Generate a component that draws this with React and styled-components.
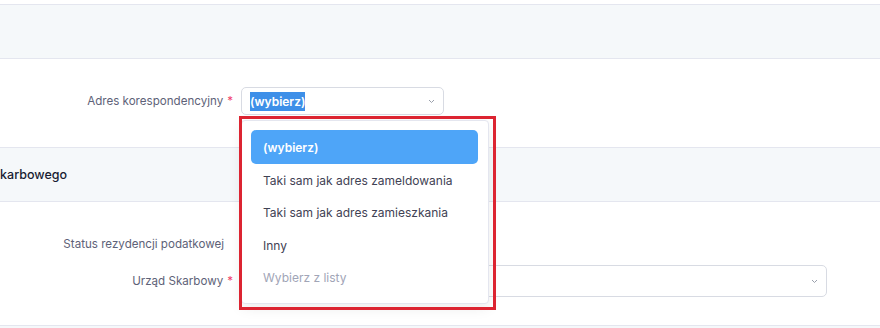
import React from "react";
import styled, { createGlobalStyle } from "styled-components";

const Global = createGlobalStyle`
  html, body { margin: 0; padding: 0; background: #ffffff; }
  body { font-family: Inter, "Noto Sans", sans-serif; }
  * { box-sizing: border-box; }
`;

const Page = styled.div`
  position: relative;
  width: 880px;
  height: 328px;
  overflow: hidden;
  background: #ffffff;
  padding-top: 4px;
`;

const SectionHeader = styled.div`
  height: ${(p) => p.$h}px;
  background: #f5f8fa;
  border-top: 1px solid #e4e6ef;
  border-bottom: 1px solid #e4e6ef;
  display: flex;
  align-items: center;
`;

const SectionTitle = styled.div`
  font-size: 12.5px;
  font-weight: 500;
  color: #181c32;
  margin-left: -8px;
`;

const FormBody = styled.div`
  display: flex;
  flex-direction: column;
  gap: ${(p) => p.$gap || 0}px;
  padding: ${(p) => p.$pad};
`;

const Row = styled.div`
  display: grid;
  grid-template-columns: 233px 1fr;
  column-gap: 8px;
  align-items: center;
  height: ${(p) => p.$h}px;
`;

const Label = styled.label`
  text-align: right;
  font-size: 11.6px;
  color: #5e6278;
  padding-right: ${(p) => (p.$required ? 0 : 9)}px;
`;

const Star = styled.span`
  color: #f1416c;
  margin-left: 4px;
`;

const SelectBox = styled.div`
  width: ${(p) => p.$w}px;
  height: ${(p) => p.$h}px;
  border: 1px solid #d8dbe3;
  border-radius: 5px;
  background: #ffffff;
  display: flex;
  align-items: center;
  justify-content: space-between;
  padding: 0 8px 0 8px;
  font-size: 12px;
`;

const Selected = styled.span`
  background: #3d8fe8;
  color: #ffffff;
  font-weight: 600;
  padding: 2px 0;
`;

const Chevron = () => (
  <svg width="7" height="5" viewBox="0 0 7 5" fill="none">
    <path d="M1 1l2.5 2.5L6 1" stroke="#9aa0ac" strokeWidth="1" />
  </svg>
);

const Footer = styled.div`
  border-top: 1px solid #e4e6ef;
  background: #f5f8fa;
  height: 10px;
`;

const Dropdown = styled.ul`
  position: absolute;
  left: 241px;
  top: 120px;
  width: 248px;
  height: 184px;
  margin: 0;
  padding: 9px 10px 9px 9px;
  list-style: none;
  background: #ffffff;
  border: 1px solid #e4e6ef;
  border-radius: 4px;
  box-shadow: 0 4px 14px rgba(0, 0, 0, 0.08);
  display: flex;
  flex-direction: column;
`;

const Item = styled.li`
  height: ${(p) => (p.$active ? 34 : 32.5)}px;
  flex: none;
  display: flex;
  align-items: center;
  padding: 0 12px;
  border-radius: 5px;
  font-size: 12px;
  white-space: nowrap;
  font-weight: ${(p) => (p.$active ? 600 : 400)};
  background: ${(p) => (p.$active ? "#4ea5f8" : "transparent")};
  color: ${(p) => (p.$active ? "#ffffff" : p.$muted ? "#a1a5b7" : "#3f4254")};
`;

const Highlight = styled.div`
  position: absolute;
  left: 239px;
  top: 116px;
  width: 257px;
  height: 194px;
  border: 3px solid #dc2431;
  pointer-events: none;
`;

export default function App() {
  return (
    <>
      <Global />
      <Page>
        <SectionHeader $h={55} />
        <FormBody $pad="28px 0 32px 0">
          <Row $h={28}>
            <Label $required>
              Adres korespondencyjny<Star>*</Star>
            </Label>
            <SelectBox $w={203} $h={28}>
              <Selected>(wybierz)</Selected>
              <Chevron />
            </SelectBox>
          </Row>
        </FormBody>
        <SectionHeader $h={55}>
          <SectionTitle>Skarbowego</SectionTitle>
        </SectionHeader>
        <FormBody $pad="32px 0 28px 0" $gap={11}>
          <Row $h={20}>
            <Label>Status rezydencji podatkowej</Label>
            <div />
          </Row>
          <Row $h={32}>
            <Label $required>
              Urząd Skarbowy<Star>*</Star>
            </Label>
            <SelectBox $w={586} $h={32}>
              <span />
              <Chevron />
            </SelectBox>
          </Row>
        </FormBody>
        <Footer />
        <Dropdown>
          <Item $active>(wybierz)</Item>
          <Item>Taki sam jak adres zameldowania</Item>
          <Item>Taki sam jak adres zamieszkania</Item>
          <Item>Inny</Item>
          <Item $muted>Wybierz z listy</Item>
        </Dropdown>
        <Highlight />
      </Page>
    </>
  );
}
